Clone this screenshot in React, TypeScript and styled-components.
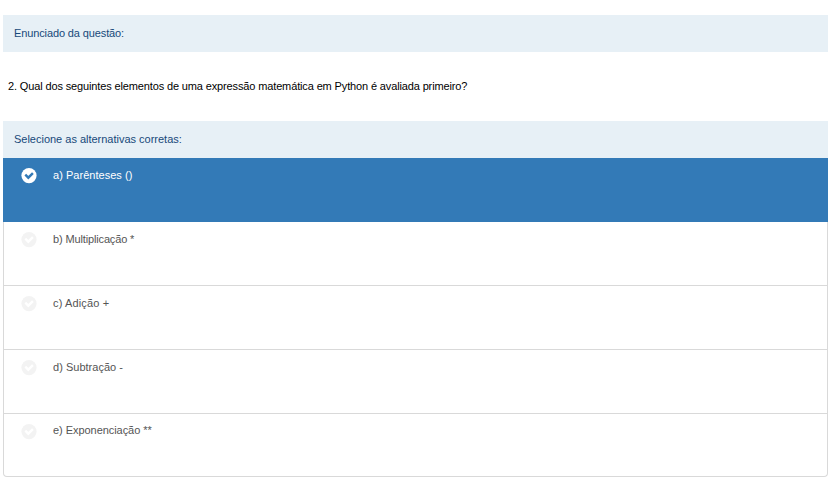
import React from "react";
import styled, { createGlobalStyle } from "styled-components";

const GlobalStyle = createGlobalStyle`
  *, *::before, *::after { box-sizing: border-box; }
  body {
    margin: 0;
    background: #fff;
    font-family: "Liberation Sans", Arial, Helvetica, sans-serif;
    font-size: 11px;
    line-height: 16px;
  }
`;

const Page = styled.main`
  width: 825px;
  margin-left: 3px;
  padding-top: 15px;
`;

const Heading = styled.header`
  height: 37px;
  padding: 10px 11px;
  background: #e7f0f6;
  color: #17497a;
`;

const Label = styled.span<{ $tracking?: number }>`
  white-space: nowrap;
  letter-spacing: ${({ $tracking = 0 }) => $tracking}px;
`;

const Question = styled.p`
  height: 69px;
  margin: 0;
  padding: 26px 5px 0;
  color: #000;
`;

const Options = styled.ul`
  margin: 0;
  padding: 0;
  list-style: none;
`;

const CheckIcon = styled.svg<{ $selected?: boolean }>`
  flex: none;
  width: 16px;
  height: 16px;
  margin: 1px 16px 0 0;
  color: ${({ $selected }) => ($selected ? "#fff" : "#f3f3f3")};
`;

const Option = styled.li<{ $selected?: boolean }>`
  display: flex;
  align-items: flex-start;
  height: 64px;
  padding: 9px 17px 0;
  border: 1px solid ${({ $selected }) => ($selected ? "#337ab7" : "#d9d9d9")};
  border-top: 0;
  background: ${({ $selected }) => ($selected ? "#337ab7" : "#fff")};
  color: ${({ $selected }) => ($selected ? "#fff" : "#555")};

  &:last-child {
    height: 63px;
    padding-top: 8px;
    border-radius: 0 0 4px 4px;
  }

  &:last-child ${CheckIcon} {
    margin-top: 2px;
  }
`;

const options = [
  { text: "a) Parênteses ()", tracking: 0.03, selected: true },
  { text: "b) Multiplicação *", tracking: -0.14 },
  { text: "c) Adição +", tracking: 0.14 },
  { text: "d) Subtração -", tracking: 0.02 },
  { text: "e) Exponenciação **", tracking: -0.05 },
];

function Check({ selected }: { selected?: boolean }) {
  return (
    <CheckIcon $selected={selected} viewBox="0 0 16 16" aria-hidden="true">
      <circle cx="8" cy="7.6" r="7.6" fill="currentColor" />
      <path
        d="M4.3 6.7 7.3 9.7 11.9 5.1"
        fill="none"
        stroke={selected ? "#337ab7" : "#fff"}
        strokeWidth="2.4"
      />
    </CheckIcon>
  );
}

export default function App() {
  return (
    <>
      <GlobalStyle />
      <Page>
        <Heading>
          <Label $tracking={-0.12}>Enunciado da questão:</Label>
        </Heading>
        <Question>
          <Label $tracking={-0.135}>
            2. Qual dos seguintes elementos de uma expressão matemática em Python é avaliada primeiro?
          </Label>
        </Question>
        <Heading>
          <Label $tracking={-0.01}>Selecione as alternativas corretas:</Label>
        </Heading>
        <Options>
          {options.map(({ text, tracking, selected }) => (
            <Option key={text} $selected={selected}>
              <Check selected={selected} />
              <Label $tracking={tracking}>{text}</Label>
            </Option>
          ))}
        </Options>
      </Page>
    </>
  );
}
